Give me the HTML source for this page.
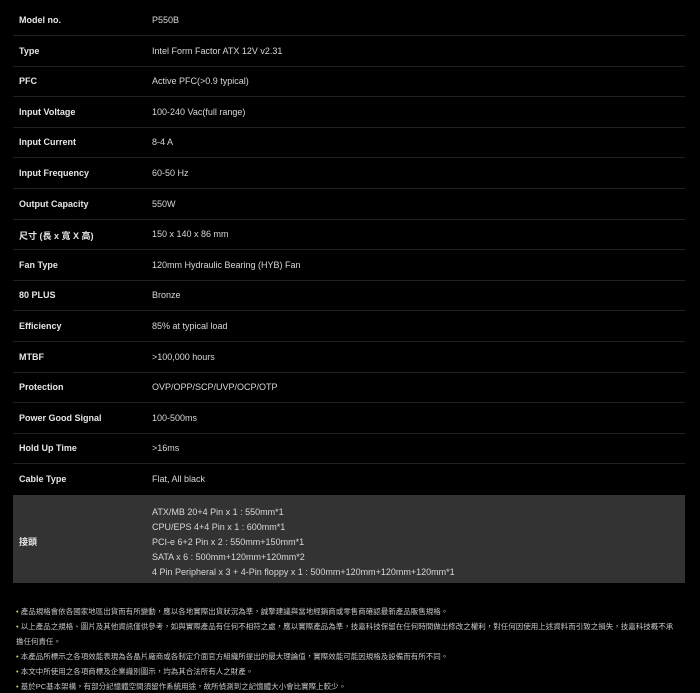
<!DOCTYPE html>
<html><head><meta charset="utf-8"><style>
body{margin:0;width:700px;height:693px;background:#000;overflow:hidden;font-family:"Liberation Sans","Noto Sans CJK TC",sans-serif;color:#ddd;position:relative}
.sep{position:absolute;left:13px;width:672px;height:1px;background:#1f1f1f}
.l{position:absolute;left:19px;font-size:9px;font-weight:bold;color:#e6e6e6;white-space:nowrap}
.v{position:absolute;left:152px;font-size:9px;color:#d8d8d8;white-space:nowrap}
.box{position:absolute;left:13px;top:495px;width:672px;height:88px;background:#333}
.n{position:absolute;left:16px;font-size:7.5px;color:#c8c8c8;white-space:nowrap}
.n b{color:#e8c860;font-weight:normal}
</style></head><body>
<div class="box"></div>
<div id="t"></div>
<div class="l" style="top:535px">接頭</div>
<div class="v" style="top:507px">ATX/MB 20+4 Pin x 1 : 550mm*1</div>
<div class="v" style="top:522px">CPU/EPS 4+4 Pin x 1 : 600mm*1</div>
<div class="v" style="top:537px">PCI-e 6+2 Pin x 2 : 550mm+150mm*1</div>
<div class="v" style="top:552px">SATA x 6 : 500mm+120mm+120mm*2</div>
<div class="v" style="top:567px">4 Pin Peripheral x 3 + 4-Pin floppy x 1 : 500mm+120mm+120mm+120mm*1</div>
<div class="n" style="top:606px"><b>•</b> 產品規格會依各國家地區出貨而有所變動，應以各地實際出貨狀況為準，誠摯建議與當地經銷商或零售商確認最新產品販售規格。</div>
<div class="n" style="top:621px"><b>•</b> 以上產品之規格、圖片及其他資訊僅供參考，如與實際產品有任何不相符之處，應以實際產品為準，技嘉科技保留在任何時間做出修改之權利，對任何因使用上述資料而引致之損失，技嘉科技概不承</div>
<div class="n" style="top:636px">擔任何責任。</div>
<div class="n" style="top:651px"><b>•</b> 本產品所標示之各項效能表現為各晶片廠商或各制定介面官方組織所提出的最大理論值，實際效能可能因規格及設備而有所不同。</div>
<div class="n" style="top:666px"><b>•</b> 本文中所使用之各項商標及企業識別圖示，均為其合法所有人之財產。</div>
<div class="n" style="top:681px"><b>•</b> 基於PC基本架構，有部分記憶體空間須留作系統用途，故所偵測到之記憶體大小會比實際上較少。</div>
<script>
var rows=[["Model no.","P550B"],["Type","Intel Form Factor ATX 12V v2.31"],["PFC","Active PFC(>0.9 typical)"],["Input Voltage","100-240 Vac(full range)"],["Input Current","8-4 A"],["Input Frequency","60-50 Hz"],["Output Capacity","550W"],["尺寸 (長 x 寬 X 高)","150 x 140 x 86 mm"],["Fan Type","120mm Hydraulic Bearing (HYB) Fan"],["80 PLUS","Bronze"],["Efficiency","85% at typical load"],["MTBF",">100,000 hours"],["Protection","OVP/OPP/SCP/UVP/OCP/OTP"],["Power Good Signal","100-500ms"],["Hold Up Time",">16ms"],["Cable Type","Flat, All black"]];
var h="";
for(var i=0;i<rows.length;i++){var y=20+30.6*i;
h+='<div class="l" style="top:'+(y-5)+'px">'+rows[i][0]+'</div><div class="v" style="top:'+(y-5)+'px">'+rows[i][1].replace(/>/g,'&gt;')+'</div>';
if(i<rows.length-1)h+='<div class="sep" style="top:'+Math.round(y+15)+'px"></div>';}
document.getElementById("t").innerHTML=h;
</script>
</body></html>
